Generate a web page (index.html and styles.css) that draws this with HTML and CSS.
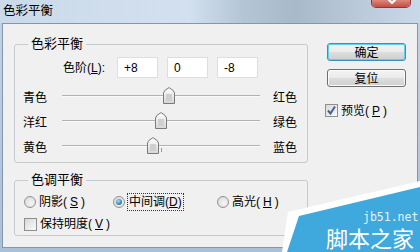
FILE: index.html
```html
<!DOCTYPE html>
<html lang="zh-CN">
<head>
  <meta charset="UTF-8">
  <title>色彩平衡</title>
  <link rel="stylesheet" href="styles.css">
</head>
<body>

  <div class="window">
    <div class="titlebar">
      <span class="title">色彩平衡</span>
      <span class="close">
        <svg width="38" height="7" viewBox="0 0 38 7">
          <path d="M15 -2 L20 3 L25 -2" fill="none" stroke="#fff" stroke-width="2.2"/>
        </svg>
      </span>
    </div>

    <div class="client">
      <div class="main">
        <fieldset class="group balance">
          <legend>色彩平衡</legend>
          <div class="levels">
            <span class="levels-label">色阶(<u>L</u>):</span>
            <input type="text" class="field" value="+8">
            <input type="text" class="field" value="0">
            <input type="text" class="field" value="-8">
          </div>
          <div class="sliders">
            <div class="slider-row">
              <span class="slider-label">青色</span>
              <div class="track">
                <svg class="thumb" style="left:101px" width="12" height="17" viewBox="0 0 12 17">
                  <defs>
                    <linearGradient id="tg" x1="0" y1="0" x2="0" y2="1">
                      <stop offset="0" stop-color="#ffffff"/>
                      <stop offset="1" stop-color="#d6d6d6"/>
                    </linearGradient>
                  </defs>
                  <path d="M0.5 16.5 V6 Q0.5 3.5 6 0.6 Q11.5 3.5 11.5 6 V16.5 Z" fill="url(#tg)" stroke="#7a7a7a"/>
                  <rect x="3" y="7" width="6" height="7" fill="#cfcfcf"/>
                </svg>
              </div>
              <span class="slider-right">红色</span>
            </div>
            <div class="slider-row">
              <span class="slider-label">洋红</span>
              <div class="track">
                <svg class="thumb" style="left:93px" width="12" height="17" viewBox="0 0 12 17">
                  <path d="M0.5 16.5 V6 Q0.5 3.5 6 0.6 Q11.5 3.5 11.5 6 V16.5 Z" fill="url(#tg)" stroke="#7a7a7a"/>
                  <rect x="3" y="7" width="6" height="7" fill="#cfcfcf"/>
                </svg>
              </div>
              <span class="slider-right">绿色</span>
            </div>
            <div class="slider-row">
              <span class="slider-label">黄色</span>
              <div class="track">
                <span class="tick"></span>
                <svg class="thumb" style="left:85px" width="12" height="17" viewBox="0 0 12 17">
                  <path d="M0.5 16.5 V6 Q0.5 3.5 6 0.6 Q11.5 3.5 11.5 6 V16.5 Z" fill="url(#tg)" stroke="#7a7a7a"/>
                  <rect x="3" y="7" width="6" height="7" fill="#cfcfcf"/>
                </svg>
              </div>
              <span class="slider-right">蓝色</span>
            </div>
          </div>
        </fieldset>

        <fieldset class="group tone">
          <legend>色调平衡</legend>
          <div class="radios">
            <label class="opt opt-shadow"><span class="radio"></span>阴影(<u>S</u>)</label>
            <label class="opt opt-mid"><span class="radio on"></span><span class="focus">中间调(<u>D</u>)</span></label>
            <label class="opt"><span class="radio"></span>高光(<u>H</u>)</label>
          </div>
          <label class="check keep"><span class="box"></span>保持明度(<u>V</u>)</label>
        </fieldset>
      </div>

      <div class="side">
        <button class="btn default">确定</button>
        <button class="btn">复位</button>
        <label class="check preview">
          <span class="box">
            <svg width="11" height="11" viewBox="0 0 11 11">
              <path d="M2 5.5 L4.5 8.5 L9 1.5" fill="none" stroke="#4a5f94" stroke-width="2"/>
            </svg>
          </span>预览(<u>P</u>)
        </label>
      </div>
    </div>

    <svg class="watermark" width="142" height="74" viewBox="0 0 142 74">
      <polygon points="10,34 142,3 142,74 4,74" fill="#ffffff"/>
      <polygon points="21,38 142,9 142,74 9,74" fill="#3fa8dc"/>
      <text x="85" y="43" class="wm-url">jb51.net</text>
      <text x="48" y="69" class="wm-name">脚本之家</text>
    </svg>
  </div>

</body>
</html>
```

FILE: styles.css
```css
* {
  box-sizing: border-box;
}
body {
  margin: 0;
  font-family: "Liberation Sans", "Noto Sans CJK SC", sans-serif;
  font-size: 12px;
  color: #000;
}
.window {
  position: relative;
  width: 420px;
  height: 252px;
  overflow: hidden;
  display: flex;
  flex-direction: column;
  padding: 0 2px 4px 2px;
  background: linear-gradient(#c3d4e7, #a9c0d8);
}
.titlebar {
  height: 23px;
  margin: 0 -2px;
  display: flex;
  justify-content: space-between;
  align-items: flex-start;
  background: linear-gradient(90deg, #cbdaea 0%, #d2e0ef 45%, #b4c5d6 58%, #a8b9ca 70%, #b9c9da 85%, #c9d9ea 100%);
}
.title {
  padding: 3px 0 0 3px;
  font-size: 12.5px;
  line-height: 16px;
}
.close {
  width: 38px;
  height: 7px;
  margin-right: 10px;
  border-radius: 0 0 4px 4px;
  background: linear-gradient(#e0857b, #c44d42);
  box-shadow: 0 0 0 1px #8c3a33;
  display: flex;
}

.client {
  flex: 1;
  display: flex;
  background: #f0f0f0;
  border: 1px solid #8696a8;
}
.main {
  width: 305px;
  padding: 13px 0 0 11px;
}
.group {
  width: 294px;
  margin: 0;
  padding: 0 8px 3px 8px;
  border: 1px solid #c4cacf;
  border-radius: 3px;
}
.group legend {
  margin-left: 5px;
  padding: 0 3px;
  font-size: 13px;
  line-height: 14px;
}
.tone {
  margin-top: 10px;
}

.levels {
  display: flex;
  align-items: center;
  gap: 9px;
  margin-top: 6px;
  padding-left: 40px;
}
.levels-label {
  width: 45px;
  line-height: 16px;
}
.field {
  width: 41px;
  height: 21px;
  border: 1px solid #dedede;
  background: #fff;
  padding: 0 6px;
  font-family: "Liberation Sans", sans-serif;
  font-size: 12px;
}

.sliders {
  margin-top: 6px;
}
.slider-row {
  display: flex;
  align-items: center;
  height: 25px;
  line-height: 16px;
}
.slider-label {
  width: 39px;
  padding-top: 3px;
}
.slider-right {
  margin-left: 13px;
  padding-top: 3px;
}
.track {
  position: relative;
  width: 198px;
  height: 2px;
  margin-top: -2px;
  border-top: 1px solid #b2b2b2;
  border-bottom: 1px solid #fafafa;
}
.thumb {
  position: absolute;
  top: -9px;
}
.tick {
  position: absolute;
  left: 99px;
  top: 2px;
  width: 1px;
  height: 4px;
  background: #9a9a9a;
}

.radios {
  display: flex;
  align-items: center;
  height: 16px;
  margin-top: 7px;
  padding-left: 1px;
  line-height: 16px;
}
.opt {
  display: flex;
  align-items: center;
  gap: 3px;
}
.opt-shadow {
  width: 89px;
}
.opt-mid {
  width: 104px;
}
.radio {
  width: 12px;
  height: 12px;
  border-radius: 50%;
  border: 1px solid #929292;
  background: radial-gradient(circle at 60% 60%, #f6f6f6, #d4d4d4);
  display: flex;
  align-items: center;
  justify-content: center;
}
.radio.on::after {
  content: "";
  width: 6px;
  height: 6px;
  border-radius: 50%;
  background: radial-gradient(circle at 40% 35%, #a6e4f6 0%, #3b8bb2 55%, #1d5878 100%);
}
.focus {
  outline: 1px dotted #333;
  padding: 0 1px;
}

.check {
  display: flex;
  align-items: center;
  gap: 3px;
  height: 16px;
  line-height: 16px;
}
.keep {
  margin-top: 6px;
  padding-left: 1px;
}
.box {
  width: 13px;
  height: 13px;
  border: 1px solid #8e8f8f;
  background: linear-gradient(135deg, #d8d8d8, #fafafa);
  display: flex;
  align-items: center;
  justify-content: center;
}

.side {
  display: flex;
  flex-direction: column;
  margin-left: 19px;
  padding-top: 19px;
}
.btn {
  width: 79px;
  height: 18px;
  margin: 0 0 8px 0;
  padding: 0;
  font-family: "Noto Sans CJK SC", sans-serif;
  font-size: 12px;
  line-height: 14px;
  border: 1px solid #707070;
  border-radius: 3px;
  background: linear-gradient(#f3f3f3 0%, #ebebeb 48%, #dddddd 52%, #cfcfcf 100%);
  box-shadow: inset 0 0 0 1px #fbfbfb;
}
.btn.default {
  border-color: #3c8fc0;
  box-shadow: inset 0 0 0 1px #5fd0f4;
}
.preview {
  margin: 8px 0 0 -2px;
  height: 15px;
}

.watermark {
  position: absolute;
  right: 0;
  bottom: 0;
}
.wm-url {
  font-family: "DejaVu Sans Mono", monospace;
  font-size: 11.5px;
  fill: #e4f4fc;
}
.wm-name {
  font-family: "Noto Sans CJK SC", sans-serif;
  font-size: 22px;
  fill: #ffffff;
}
```
